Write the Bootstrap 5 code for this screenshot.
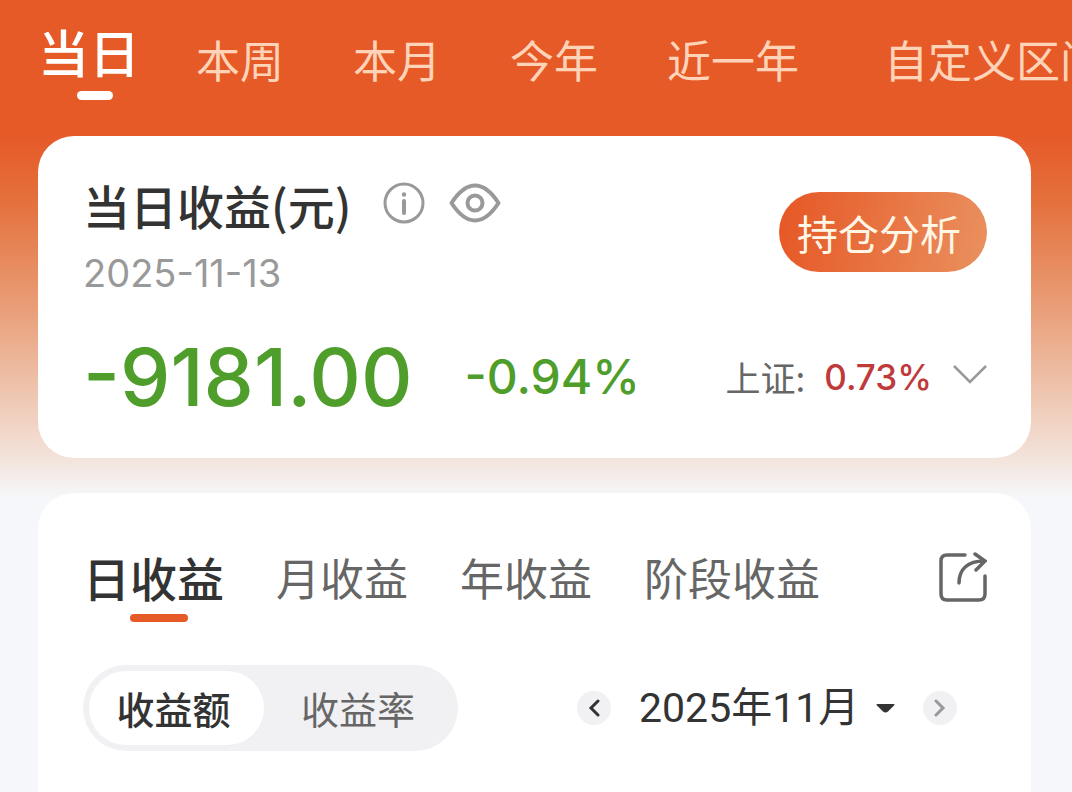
<!DOCTYPE html>
<html lang="zh-CN">
<head>
<meta charset="utf-8">
<meta name="viewport" content="width=device-width, initial-scale=1">
<title>当日收益</title>
<link href="https://cdn.jsdelivr.net/npm/bootstrap@5.3.0/dist/css/bootstrap.min.css" rel="stylesheet">
<style>
  body {
    font-family: "Noto Sans CJK SC", sans-serif;
    color: #333;
    background: #f6f7fa linear-gradient(#e65a28 0, #e65a28 136px, #e4703c 200px, #e99f79 310px, #f3e4dc 460px, #f6f7fa 498px) no-repeat;
    min-height: 100vh;
    overflow-x: hidden;
  }
  button { font-family: inherit; }
  .plain { border: 0; background: none; padding: 0; color: inherit; font-weight: inherit; }
  .period { padding: 21px 0 0 38px; gap: 69px; height: 136px; overflow: hidden; }
  .period button { font-size: 44px; line-height: 60px; color: #ffd3b8; padding-top: 8px; }
  .period button.active { font-size: 51px; font-weight: 500; color: #fff; padding-top: 0; margin-right: -13px; }
  .period button.active::after { content: ""; display: block; width: 36px; height: 9px; border-radius: 5px; background: #fff; margin: 10px 0 0 39px; }
  .panel { background: #fff; border-radius: 36px; margin: 0 41px 35px 38px; padding: 39px 44px 41px 45px; }
  .panel-title { font-size: 47px; line-height: 60px; font-weight: 500; }
  .title-row { padding-bottom: 4px; }
  .date { font: 400 38px/48px Inter, sans-serif; color: #999; margin-top: 10px; }
  .analyse { width: 208px; height: 80px; font-size: 41px; line-height: 80px; padding-right: 8px; color: #fff6e6; background: linear-gradient(100deg, #e65a28 5%, #e98e5c 95%); margin-top: 17px; }
  .figures { margin-top: 40px; line-height: 80px; font-family: Inter, "Noto Sans CJK SC", sans-serif; font-weight: 500; }
  .amount { font-size: 80px; color: #4f9e2b; }
  .rate { font-size: 48px; color: #4f9e2b; margin-left: 52px; }
  .index-name { font-size: 35px; color: #666; font-weight: 400; font-family: "Noto Sans CJK SC", sans-serif; }
  .index-rate { font-size: 35px; color: #bf3a3a; margin: 0 21px 0 19px; }
  .kinds { gap: 52px; }
  .kinds button { font-size: 44px; line-height: 60px; color: #666; }
  .kinds button.active { font-size: 47px; font-weight: 500; color: #333; }
  .kinds button.active::after { content: ""; display: block; width: 58px; height: 8px; border-radius: 4px; background: #e65a28; margin: 7px 0 0 47px; }
  .calendar { padding-top: 54px; }
  .switcher { background: #f1f1f3; border-radius: 43px; padding: 6px; width: 375px; }
  .switcher label { font-size: 38px; line-height: 74px; border-radius: 37px; color: #666; text-align: center; flex: 1 1 188px; cursor: pointer; }
  .switcher .btn-check:checked + label { background: #fff; color: #333; font-weight: 500; flex: 0 0 175px; padding-right: 6px; }
  .controls { margin-top: 43px; }
  .round { width: 34px; height: 34px; border-radius: 50%; background: #f1f1f3; }
  .month { appearance: none; border: 0; background: none; padding: 0 35px 0 0; font-size: 41px; line-height: 60px; color: #333; font-family: Roboto, "Noto Sans CJK SC", sans-serif; }
  .caret { right: 0; top: 50%; margin-top: -4px; pointer-events: none; }
  .stepper { margin-right: 30px; gap: 28px; }
</style>
</head>
<body class="d-flex flex-column">
<nav class="period d-flex align-items-start text-nowrap" aria-label="区间">
  <button class="plain flex-shrink-0 active">当日</button>
  <button class="plain flex-shrink-0">本周</button>
  <button class="plain flex-shrink-0">本月</button>
  <button class="plain flex-shrink-0">今年</button>
  <button class="plain flex-shrink-0">近一年</button>
  <button class="plain flex-shrink-0 ms-3">自定义区间</button>
</nav>

<main class="d-flex flex-column flex-grow-1">
  <section class="panel">
    <div class="d-flex justify-content-between align-items-start">
      <div>
        <div class="title-row d-flex align-items-center">
          <h1 class="panel-title m-0">当日收益(元)</h1>
          <button class="plain d-flex ms-4 ps-2 pb-1" aria-label="说明">
            <svg width="42" height="42" viewBox="0 0 42 42" fill="none" stroke="#999" stroke-width="3"><circle cx="21" cy="21" r="19"/><path d="M21 19v12" stroke-width="4" stroke-linecap="round"/><circle cx="21" cy="12.500" r="2.200" fill="#999" stroke="none"/></svg>
          </button>
          <button class="plain d-flex ms-4 pb-1" aria-label="显示金额">
            <svg width="52" height="42" viewBox="0 0 52 42" fill="none" stroke="#999" stroke-width="4"><path d="M2.500 21C9 11 17 3.500 26 3.500S43 11 49.500 21C43 31 35 38.500 26 38.500S9 31 2.500 21z" stroke-linejoin="round"/><circle cx="26" cy="21" r="7.500"/></svg>
          </button>
        </div>
        <div class="date">2025-11-13</div>
      </div>
      <button class="plain analyse rounded-pill">持仓分析</button>
    </div>
    <div class="figures d-flex align-items-center">
      <span class="amount">-9181.00</span>
      <span class="rate">-0.94%</span>
      <button class="plain d-flex align-items-center ms-auto">
        <span class="index-name">上证:</span>
        <span class="index-rate">0.73%</span>
        <svg class="mb-1" width="34" height="20" viewBox="0 0 34 20" fill="none" stroke="#999" stroke-width="2.500"><path d="M1 1l16 16L33 1"/></svg>
      </button>
    </div>
  </section>

  <section class="panel calendar flex-grow-1 mb-0 rounded-bottom-0">
    <div class="d-flex justify-content-between align-items-start">
      <div class="kinds d-flex align-items-start text-nowrap">
        <button class="plain active text-start">日收益</button>
        <button class="plain">月收益</button>
        <button class="plain">年收益</button>
        <button class="plain">阶段收益</button>
      </div>
      <button class="plain d-flex pt-1" aria-label="分享">
        <svg width="48" height="52" viewBox="0 0 48 52" fill="none" stroke="#666" stroke-width="3.500" stroke-linecap="round"><path d="M26 4H8q-6 0-6 6v33q0 6 6 6h32q6 0 6-6V25"/><path d="M20 32C20 18 29 10 45 10M36 3l10 7-9 9"/></svg>
      </button>
    </div>
    <div class="controls d-flex justify-content-between align-items-center">
      <div class="switcher d-flex">
        <input class="btn-check" type="radio" name="unit" id="unit-amount" checked>
        <label for="unit-amount">收益额</label>
        <input class="btn-check" type="radio" name="unit" id="unit-rate">
        <label for="unit-rate">收益率</label>
      </div>
      <div class="stepper d-flex align-items-center">
        <button class="plain round d-flex align-items-center justify-content-center" aria-label="上个月">
          <svg width="12" height="18" viewBox="0 0 12 18" fill="none" stroke="#333" stroke-width="3" stroke-linecap="round"><path d="M10 2L3 9l7 7"/></svg>
        </button>
        <div class="position-relative">
          <select class="month" aria-label="月份"><option>2025年11月</option></select>
          <svg class="caret position-absolute" width="19" height="9" viewBox="0 0 19 9"><path d="M1.500 0h16q2 0 .5 1.500L12 7.500q-2.500 2-5 0L1 1.500Q-.5 0 1.500 0z" fill="#333"/></svg>
        </div>
        <button class="plain round d-flex align-items-center justify-content-center" aria-label="下个月">
          <svg width="12" height="18" viewBox="0 0 12 18" fill="none" stroke="#999" stroke-width="3" stroke-linecap="round"><path d="M2 2l7 7-7 7"/></svg>
        </button>
      </div>
    </div>
  </section>
</main>
<script src="https://cdn.jsdelivr.net/npm/bootstrap@5.3.0/dist/js/bootstrap.bundle.min.js"></script>
</body>
</html>
